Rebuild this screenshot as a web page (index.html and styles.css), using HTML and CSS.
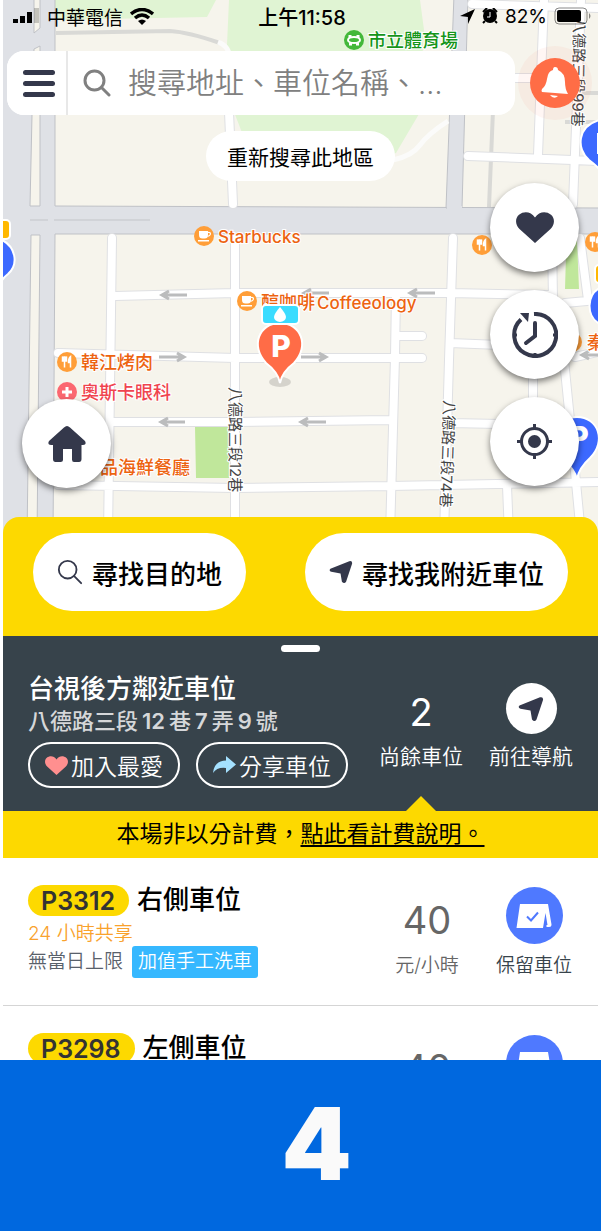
FILE: index.html
```html
<!DOCTYPE html>
<html lang="zh-Hant">
<head>
    <meta charset="UTF-8">
    <meta name="viewport" content="width=device-width, initial-scale=1.0">
    <title>尋找車位</title>
    <link rel="stylesheet" href="styles.css">
</head>
<body>
    <!-- shared icons -->
    <svg class="defs" width="0" height="0" aria-hidden="true">
        <symbol id="icon-search" viewBox="0 0 28 28">
            <circle cx="11.500" cy="11.500" r="9.500" fill="none" stroke="currentColor"/>
            <path d="M18.500 18.500L26 26" fill="none" stroke="currentColor" stroke-linecap="round"/>
        </symbol>
        <symbol id="icon-nav" viewBox="0 0 26 26">
            <path d="M1.500 9.500L22 1.300Q25.500 0.500 25 4L18.500 23.500Q16.500 26.500 14 23.500L12.500 14.500L2.500 12.800Q-0.500 11.500 1.500 9.500Z" fill="currentColor"/>
        </symbol>
        <symbol id="icon-heart" viewBox="0 0 38 31">
            <path d="M19 31L3.500 17C-1 12.500-1 6 3 2.700C8-1.300 15-0.500 19 5.500C23-0.500 30-1.300 35 2.700C39 6 39 12.500 34.500 17Z" fill="currentColor"/>
        </symbol>
        <symbol id="icon-reserve" viewBox="0 0 36 24">
            <path d="M4 0H32L35.500 20.500Q35.500 23 33 23H30.500V21H31.500L29.500 9L27 24H0.500Z" fill="#fff"/>
            <path d="M11 12.500L15 16.500L22 8.500" fill="none" stroke="#4f79ff" stroke-width="2"/>
        </symbol>
        <symbol id="poi-food" viewBox="0 0 20 20">
            <circle cx="10" cy="10" r="10" fill="#ff9e38"/>
            <path d="M5.500 4.500V9H9.500V4.500M7.500 4.500V15.500M13.500 15.500V4.500Q11.500 6 11.500 10.500H13.500" fill="#fff" stroke="#fff" stroke-width="1.500"/>
        </symbol>
        <symbol id="poi-cafe" viewBox="0 0 20 20">
            <circle cx="10" cy="10" r="10" fill="#ff9e38"/>
            <path d="M5 5H14V9Q14 12.500 10.500 12.500H8.500Q5 12.500 5 9ZM4 14H15V15.500H4Z" fill="#fff"/>
            <path d="M14 6.500Q17 6 16.300 8.500Q16 10 13.500 10.300" fill="none" stroke="#fff" stroke-width="1.200"/>
        </symbol>
    </svg>

    <main class="phone">
        <section class="map">
            <svg class="map-canvas" viewBox="3 0 595 535" preserveAspectRatio="xMidYMin slice">
                <defs>
                    <path id="streets" d="M112 238L108 535M229 112L233 204M235 238V535M115 296L235 293H450L548 295M58 353L235 358H422M397 336H422M112 422H235L390 420M58 485L235 488L390 486L598 482M396 293L395 357L390 535M453 238L449 360L444 535M450 343L500 345M450 423L500 424M533 370V410M507 486L509 535M563 350L572 440L581 535M552 238L553 300M580 238L588 300M565 303L598 300M575 357L598 352M544 0L538 155M581 0L573 204M468 156L598 161M516 78H540M472 4L598 8"/>
                </defs>
                <rect x="3" width="595" height="535" fill="#f6f4ec"/>

                <!-- parks -->
                <path d="M54 0H216L207 17L54 20ZM229 0H420L424 30L419 114L396 153L370 162H250L241 130L234 112L227 45Z" fill="#e0f4d3"/>

                <!-- boulevards -->
                <g fill="#dfe1e6" stroke="#bfc1c6" stroke-width="1">
                    <path d="M-5-5H55V206L600 208V234L55 234L53 540H-5Z"/>
                    <path d="M454-5H468L462 208H446Z"/>
                    <path d="M34 49L40 46V206H30L32 115ZM34 33V-5H40V28Z" fill="#f6f4ec"/>
                    <path d="M31 235H40L37 540H27Z" fill="#f6f4ec"/>
                </g>
                <path d="M447 206H462V210H447ZM2 207H60V233H2Z" fill="#dfe1e6"/>
                <path d="M30 220H48M54 220H150" stroke="#c3c5c9" stroke-width="1"/>

                <!-- lanes -->
                <g fill="none" stroke="#d9d9d6" stroke-width="4">
                    <path d="M56 33L170 31Q188 32 220 43M493 110L489 207M568 93H598M565 122H598"/>
                    <path d="M218 42Q229 46 229 56M393 160Q412 156 420 145T448 121" stroke="#fbfbfa" stroke-width="5"/>
                </g>

                <!-- small streets: casing, then fill -->
                <use href="#streets" class="streets casing"/>
                <use href="#streets" class="streets"/>

                <path d="M195 427H229V478H196ZM566 255L577 240L579 289H565Z" fill="#c0e79b"/>

                <!-- one way arrows -->
                <g fill="none" stroke="#bbbcbd" stroke-width="3">
                    <path d="M187 295H162M169 291L162 295L169 299M185 422H161M168 418L161 422L168 426M329 293H304M311 289L304 293L311 297M435 293H410M417 289L410 293L417 297M326 422H301M308 418L301 422L308 426M159 357H184M177 353L184 357L177 361M301 357H326M319 353L326 357L319 361M600 355H582M589 351L582 355L589 359"/>
                </g>

                <!-- places -->
                <circle cx="354" cy="40" r="10" fill="#43b83a"/>
                <ellipse cx="354" cy="40" rx="6" ry="3" fill="none" stroke="#fff" stroke-width="2"/>
                <path d="M350 35V38M358 35V38M349 44H352M356 44H359" stroke="#fff" stroke-width="3"/>
                <use href="#poi-cafe" x="194" y="226" width="20" height="20"/>
                <use href="#poi-cafe" x="237" y="291" width="20" height="20"/>
                <use href="#poi-food" x="57" y="352" width="20" height="20"/>
                <use href="#poi-food" x="472" y="235" width="20" height="20"/>
                <use href="#poi-food" x="585" y="232" width="20" height="20"/>
                <circle cx="572" cy="342" r="10" fill="#ff9e38"/>
                <circle cx="67" cy="392" r="10" fill="#fb6770"/>
                <path d="M67 387V397M62 392H72" stroke="#fff" stroke-width="3"/>
                <g class="place">
                    <text x="368" y="47" class="green">市立體育場</text>
                    <text x="218" y="243" class="latin">Starbucks</text>
                    <text x="261" y="309">醇咖啡<tspan class="latin" x="317">Coffeeology</tspan></text>
                    <text x="81" y="369">韓江烤肉</text>
                    <text x="81" y="399" class="red">奧斯卡眼科</text>
                    <text x="100" y="474">品海鮮餐廳</text>
                    <text x="587" y="349">秦</text>
                </g>
                <g class="road-name">
                    <text transform="translate(230 387) rotate(90)">八德路三段12巷</text>
                    <text transform="translate(444 400) rotate(92)">八德路三段74巷</text>
                    <text transform="translate(574 18) rotate(91)">八德路三段99巷</text>
                </g>

                <!-- parking pins -->
                <ellipse cx="280" cy="382" rx="11" ry="5" fill="#0002"/>
                <g stroke="#fff" stroke-width="2">
                    <path d="M280 383Q278 372 266 363C250 346 259 323 280 323S310 346 294 363Q282 372 280 383Z" fill="#ff6c47"/>
                    <rect x="262" y="305" width="37" height="19" rx="4" fill="#3bdcff"/>
                    <path d="M-4 292Q0 280 8 274C19 264 16 246 0 239H-4Z" fill="#3c69ff"/>
                    <path d="M600 170Q597 166 589 160C576 149 577 126 600 120Z" fill="#3c69ff"/>
                    <path d="M600 324C586 317 586 294 600 288Z" fill="#3c69ff"/>
                    <path d="M577 479Q575 470 563 459C547 441 556 417 577 417S607 441 590 458Q579 468 577 479Z" fill="#3c69ff"/>
                    <rect x="-4" y="220" width="14" height="19" rx="4" fill="#ffb800"/>
                    <rect x="595" y="265" width="14" height="18" rx="4" fill="#ffb800"/>
                </g>
                <path d="M280 307Q286 314 286 317A6 5 0 0 1 274 317Q274 314 280 307Z" fill="#fff"/>
                <path d="M600 133H597V154H600Z" fill="#fff"/>
                <g class="pin-letter">
                    <text x="281" y="357">P</text>
                    <text x="579" y="448">P</text>
                </g>
            </svg>

            <header class="status-bar">
                <div class="status-left">
                    <svg width="27" height="16" viewBox="0 0 27 16">
                        <path d="M0 11H5V15H0ZM7 8H12V15H7ZM14 4H19V15H14Z"/>
                        <path d="M21 0H26V15H21Z" fill="#0003"/>
                    </svg>
                    <span>中華電信</span>
                    <svg width="24" height="17" viewBox="0 0 24 17">
                        <path d="M1 6Q12-3 23 6M5 10Q12 4 19 10" fill="none" stroke="#000" stroke-width="3.500"/>
                        <path d="M8 13Q12 10 16 13L12 17Z"/>
                    </svg>
                </div>
                <time class="clock">上午11:58</time>
                <div class="status-right">
                    <svg width="15" height="15" viewBox="0 0 15 15"><path d="M15 0L8 15V8L0 7Z"/></svg>
                    <svg width="16" height="16" viewBox="0 0 16 16">
                        <circle cx="8" cy="8" r="7"/>
                        <path d="M1 4L5 0M11 0L15 4M3 13L1 15M13 13L15 15" stroke="#000" stroke-width="2"/>
                        <path d="M8 4V9H5" fill="none" stroke="#fff" stroke-width="1"/>
                    </svg>
                    <span>82%</span>
                    <svg width="37" height="18" viewBox="0 0 37 18">
                        <rect x="1" y="1" width="32" height="16" rx="4" fill="none" stroke="#0007"/>
                        <rect x="3" y="3" width="24" height="12" rx="2"/>
                        <path d="M35 6Q38 9 35 12Z" fill="#0007"/>
                    </svg>
                </div>
            </header>

            <div class="top-row">
                <form class="search-bar">
                    <button type="button" class="menu" aria-label="選單"><i></i><i></i><i></i></button>
                    <label for="address" aria-label="搜尋">
                        <svg width="28" height="28" stroke-width="3"><use href="#icon-search"/></svg>
                    </label>
                    <input type="text" id="address" placeholder="搜尋地址、車位名稱、…">
                </form>
                <button type="button" class="bell" aria-label="通知">
                    <svg width="28" height="32" viewBox="0 0 28 32">
                        <path d="M14 0Q17 0 17 3Q24 6 24 15Q24 22 27 27L1 25Q0 24 1 22Q5 19 6 12Q7 4 12 3Q12 0 14 0Z" fill="#fff"/>
                        <path d="M9 28L17 29Q13 33 9 28Z" fill="#fff"/>
                    </svg>
                </button>
            </div>
            <button type="button" class="research">重新搜尋此地區</button>

            <nav class="map-tools">
                <button type="button" class="round" aria-label="最愛"><svg width="38" height="31"><use href="#icon-heart"/></svg></button>
                <button type="button" class="round" aria-label="紀錄">
                    <svg width="46" height="46" viewBox="0 0 46 46" fill="none" stroke="currentColor" stroke-width="4">
                        <path d="M22 2A21 21 0 1 1 9 7.500"/>
                        <path d="M23 11V24L14 31" stroke-linecap="round"/>
                        <path d="M2 23H5M41 23H44M23 41V44" stroke-width="3"/>
                        <path d="M8 1H17L16 10Z" fill="currentColor" stroke="none"/>
                    </svg>
                </button>
                <button type="button" class="round" aria-label="定位">
                    <svg width="35" height="35" viewBox="0 0 35 35" fill="none" stroke="currentColor" stroke-width="3">
                        <circle cx="17.500" cy="17.500" r="13"/>
                        <circle cx="17.500" cy="17.500" r="6.500" fill="currentColor" stroke="none"/>
                        <path d="M17.500 0V6M17.500 29V35M0 17.500H6M29 17.500H35"/>
                    </svg>
                </button>
            </nav>
            <button type="button" class="round home" aria-label="首頁">
                <svg width="38" height="36" viewBox="0 0 38 36">
                    <path d="M19 0Q20.500 0 22 1.500L37 15Q39 19 35 19H33.500V33Q33.500 36 31 36H26Q24 36 24 33.500V23H15V33.500Q15 36 12.500 36H7.500Q5 36 5 33V19H3Q-1 19 1 15L16 1.500Q17.500 0 19 0Z" fill="currentColor"/>
                </svg>
            </button>
        </section>

        <section class="actions">
            <button type="button">
                <svg width="26" height="26" stroke-width="2"><use href="#icon-search"/></svg>
                尋找目的地
            </button>
            <button type="button">
                <svg width="24" height="24"><use href="#icon-nav"/></svg>
                尋找我附近車位
            </button>
        </section>

        <section class="lot">
            <div class="handle"></div>
            <div class="lot-grid">
                <div class="lot-info">
                    <h1>台視後方鄰近車位</h1>
                    <p>八德路三段<b>12</b>巷<b>7</b>弄<b>9</b>號</p>
                    <div class="lot-buttons">
                        <button type="button"><svg class="pink" width="23" height="19"><use href="#icon-heart"/></svg>加入最愛</button>
                        <button type="button">
                            <svg width="23" height="18" viewBox="0 0 23 18"><path d="M13 0L23 8.500L13 17V12Q4 11 0 17Q1 5 13 4.500Z" fill="#a4e1ff"/></svg>分享車位
                        </button>
                    </div>
                </div>
                <div class="lot-count">
                    <strong>2</strong>
                    <span>尚餘車位</span>
                </div>
                <a class="lot-nav" href="#">
                    <i><svg width="26" height="26"><use href="#icon-nav"/></svg></i>
                    <span>前往導航</span>
                </a>
            </div>
        </section>

        <p class="notice">本場非以分計費，<a href="#">點此看計費說明。</a></p>

        <ul class="spaces">
            <li>
                <div>
                    <h2><span class="code">P3312</span>右側車位</h2>
                    <p class="share">24 小時共享</p>
                    <p class="limit">無當日上限<span class="tag">加值手工洗車</span></p>
                </div>
                <div class="price"><strong>40</strong><span>元/小時</span></div>
                <a class="reserve" href="#"><i><svg width="36" height="24"><use href="#icon-reserve"/></svg></i><span>保留車位</span></a>
            </li>
            <li>
                <div>
                    <h2><span class="code">P3298</span>左側車位</h2>
                </div>
                <div class="price"><strong>40</strong></div>
                <a class="reserve" href="#" aria-label="保留車位"><i><svg width="36" height="24"><use href="#icon-reserve"/></svg></i></a>
            </li>
        </ul>
    </main>

    <footer class="step">4</footer>
</body>
</html>
```

FILE: styles.css
```css
* {
    box-sizing: border-box;
}
body {
    display: flex;
    flex-direction: column;
    height: 100vh;
    margin: 0;
    background: #fff;
    color: #000;
    font-family: Inter, "Noto Sans CJK TC", sans-serif;
}
h1, h2, p, ul {
    margin: 0;
    padding: 0;
}
button {
    padding: 0;
    border: none;
    background: #fff;
    color: inherit;
    font-family: inherit;
    cursor: pointer;
}
a {
    color: inherit;
}
svg {
    display: block;
    flex: none;
}
.defs {
    position: absolute;
}
.phone {
    flex: 1;
    min-height: 0;
    margin: 0 3px;
    overflow: hidden;
}

/* map */
.map {
    position: relative;
    height: 535px;
    overflow: hidden;
    color: #34384b;
}
.map-canvas {
    position: absolute;
    top: 0;
    left: 0;
    width: 100%;
    height: 100%;
}
.streets {
    fill: none;
    stroke: #fff;
    stroke-width: 8px;
    stroke-linecap: round;
}
.streets.casing {
    stroke: #dfe0e3;
    stroke-width: 10px;
}
.place {
    font-size: 18px;
    font-weight: 500;
    fill: #ed6310;
    stroke: #fff;
    stroke-width: 2px;
    paint-order: stroke;
}
.place .latin {
    font-size: 17px;
}
.place .green {
    fill: #15951a;
}
.place .red {
    fill: #f0444f;
}
.road-name {
    font-size: 15px;
    fill: #444;
    stroke: #fff;
    stroke-width: 2px;
    paint-order: stroke;
}
.pin-letter {
    font-size: 30px;
    font-weight: 800;
    fill: #fff;
    text-anchor: middle;
}

.status-bar {
    position: relative;
    display: grid;
    grid-template-columns: 1fr auto 1fr;
    align-items: center;
    height: 32px;
    padding: 0 7px 0 10px;
    color: #000;
    font-size: 19px;
}
.status-left,
.status-right {
    display: flex;
    align-items: center;
    gap: 7px;
}
.status-right {
    justify-content: flex-end;
}
.clock {
    font-size: 20px;
    font-weight: 500;
}

.top-row {
    position: relative;
    display: flex;
    align-items: center;
    justify-content: space-between;
    padding: 19px 18px 0 4px;
}
.search-bar {
    display: flex;
    flex: 1;
    align-items: center;
    height: 64px;
    margin-right: 15px;
    overflow: hidden;
    border-radius: 17px;
    background: #fff;
}
.menu {
    display: grid;
    gap: 6px;
    align-content: center;
    justify-content: center;
    width: 61px;
    height: 100%;
    padding-left: 4px;
    border-right: 2px solid #e8e8e8;
}
.menu i {
    width: 32px;
    height: 5px;
    border-radius: 3px;
    background: #34384b;
}
.search-bar label {
    margin: 0 17px 0 15px;
    color: #808080;
}
.search-bar input {
    flex: 1;
    min-width: 0;
    height: 100%;
    padding: 0;
    border: none;
    outline: none;
    background: none;
    font-family: inherit;
    font-size: 29px;
    font-weight: 350;
}
.search-bar input::placeholder {
    color: #808080;
}
.bell {
    display: grid;
    place-items: center;
    width: 50px;
    height: 50px;
    border-radius: 50%;
    background: #ff6d46;
    box-shadow: 0 0 0 12px rgba(255, 109, 70, 0.06);
}
.research {
    position: relative;
    display: block;
    height: 50px;
    margin: 16px auto 0;
    padding: 0 21px;
    border-radius: 25px;
    color: #000;
    font-size: 21px;
}
.map-tools {
    position: absolute;
    top: 183px;
    right: 19px;
    display: grid;
    gap: 18px;
}
.round {
    display: grid;
    place-items: center;
    width: 89px;
    height: 89px;
    border-radius: 50%;
    box-shadow: 0 3px 6px rgba(0, 0, 0, 0.5);
}
.home {
    position: absolute;
    top: 399px;
    left: 19px;
}

/* yellow bar */
.actions {
    position: relative;
    display: flex;
    justify-content: space-between;
    align-items: flex-start;
    height: 119px;
    margin-top: -18px;
    padding: 16px 30px 0;
    border-radius: 16px 16px 0 0;
    background: #fdd900;
}
.actions button {
    display: flex;
    align-items: center;
    gap: 9px;
    height: 78px;
    padding: 0 24px;
    border-radius: 39px;
    font-size: 26px;
    font-weight: 500;
}
.actions svg {
    color: #34384b;
}

/* selected parking lot */
.lot {
    padding: 9px 25px 23px;
    background: #37434b;
    color: #fff;
}
.handle {
    width: 39px;
    height: 7px;
    margin: 0 auto 21px;
    border-radius: 4px;
    background: #fff;
}
.lot-grid {
    display: grid;
    grid-template-columns: 1fr 84px 84px;
    gap: 26px;
}
.lot h1 {
    font-size: 26px;
    font-weight: 500;
    line-height: 32px;
    white-space: nowrap;
}
.lot p {
    color: #d5d7d9;
    font-size: 22px;
    font-weight: 500;
    line-height: 32px;
    white-space: nowrap;
}
.lot p b {
    margin: 0 4px;
    font-weight: 600;
}
.lot-buttons {
    display: flex;
    gap: 16px;
    margin-top: 5px;
}
.lot-buttons button {
    display: flex;
    align-items: center;
    justify-content: center;
    gap: 3px;
    width: 152px;
    height: 46px;
    border: 2px solid #fff;
    border-radius: 23px;
    background: none;
    font-size: 23px;
    font-weight: 350;
    white-space: nowrap;
}
.pink {
    color: #ff8f8f;
}
.lot-count,
.lot-nav {
    display: flex;
    flex-direction: column;
    align-items: center;
    padding-top: 10px;
    font-size: 21px;
    font-weight: 350;
    line-height: 30px;
    text-decoration: none;
    white-space: nowrap;
}
.lot-count strong {
    font-size: 38px;
    font-weight: 400;
    line-height: 59px;
}
.lot-nav i {
    display: grid;
    place-items: center;
    width: 51px;
    height: 51px;
    margin-bottom: 8px;
    border-radius: 50%;
    background: #fff;
    color: #34384b;
}

.notice {
    position: relative;
    height: 47px;
    background: #fdd900;
    font-size: 23px;
    line-height: 46px;
    text-align: center;
}
.notice::before {
    content: "";
    position: absolute;
    right: 162px;
    bottom: 100%;
    border: 15px solid transparent;
    border-top-width: 0;
    border-bottom-color: #fdd900;
}
.notice a {
    text-underline-offset: 3px;
}

/* list of spaces */
.spaces {
    list-style: none;
}
.spaces li {
    display: grid;
    grid-template-columns: 1fr 70px 78px;
    gap: 33px;
    padding: 27px 25px;
    border-bottom: 1px solid #d5d5d5;
    font-size: 19px;
    font-weight: 350;
    white-space: nowrap;
}
.spaces h2 {
    display: flex;
    gap: 8px;
    height: 32px;
    font-size: 26px;
    font-weight: 500;
    line-height: 30px;
}
.code {
    height: 31px;
    padding: 0 14px 0 13px;
    border-radius: 16px;
    background: #fdd900;
    color: #333;
    font-size: 25px;
    font-weight: 600;
    line-height: 32px;
}
.share {
    height: 29px;
    color: #f9a22d;
    line-height: 34px;
}
.limit {
    display: flex;
    gap: 9px;
    color: #59616b;
    line-height: 32px;
}
.tag {
    padding: 0 6px;
    border-radius: 3px;
    background: #36b8ff;
    color: #fff;
}
.price,
.reserve {
    display: flex;
    flex-direction: column;
    align-items: center;
    line-height: 22px;
    text-decoration: none;
}
.price {
    color: #666;
}
.price strong {
    font-size: 38px;
    font-weight: 400;
    line-height: 70px;
}
.reserve {
    color: #37434b;
}
.reserve i {
    display: grid;
    place-items: center;
    width: 57px;
    height: 57px;
    margin: 2px 0 11px;
    border-radius: 50%;
    background: #4f79ff;
}

.step {
    height: 171px;
    padding-left: 32px;
    background: #0068df;
    color: #fafafa;
    font-family: Inter, sans-serif;
    font-size: 100px;
    font-weight: 900;
    line-height: 168px;
    text-align: center;
}
```
